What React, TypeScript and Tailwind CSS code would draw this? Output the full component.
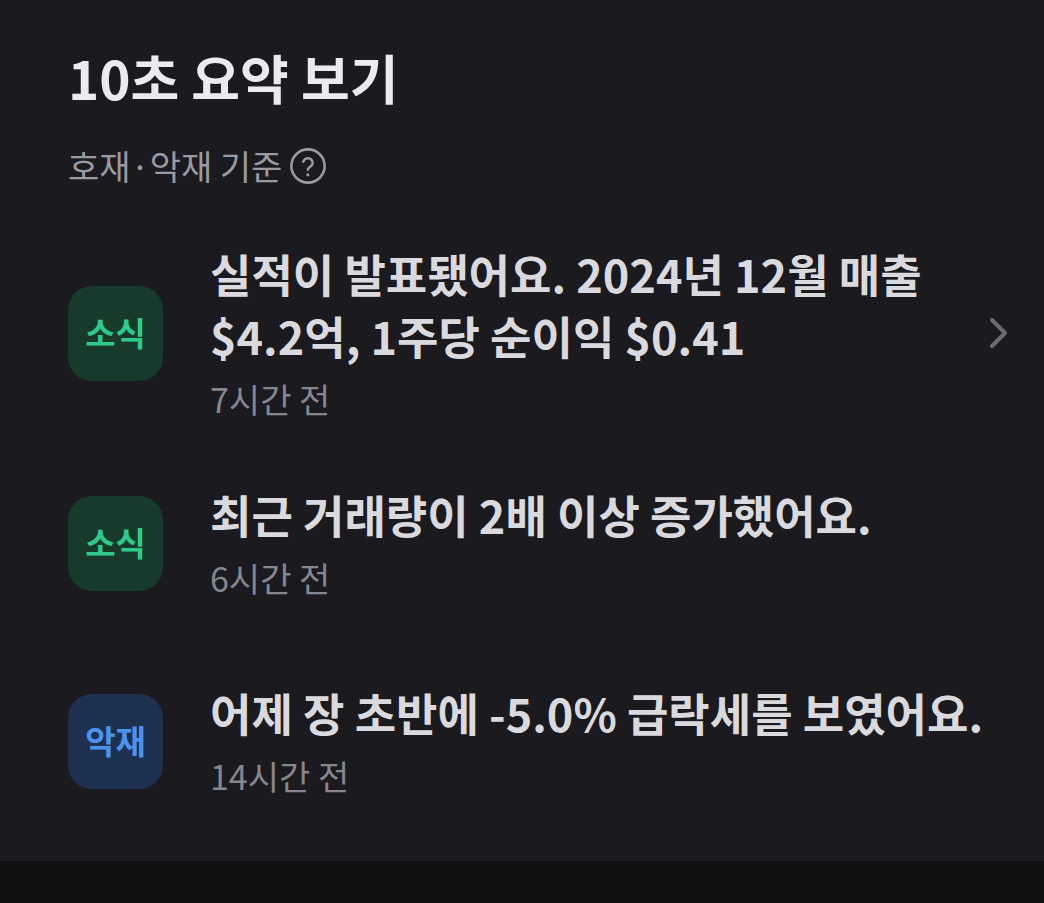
import React from 'react';

type Item = {
  tag: string;
  tone: 'good' | 'bad';
  title: string[];
  time: string;
  space: string;
  link?: boolean;
};

const items: Item[] = [
  {
    tag: '소식',
    tone: 'good',
    title: ['실적이 발표됐어요. 2024년 12월 매출', '$4.2억, 1주당 순이익 $0.41'],
    time: '7시간 전',
    space: 'mt-0',
    link: true,
  },
  { tag: '소식', tone: 'good', title: ['최근 거래량이 2배 이상 증가했어요.'], time: '6시간 전', space: 'mt-[61px]' },
  { tag: '악재', tone: 'bad', title: ['어제 장 초반에 -5.0% 급락세를 보였어요.'], time: '14시간 전', space: 'mt-[80px]' },
];

function Badge({ tag, tone }: { tag: string; tone: Item['tone'] }) {
  const cls =
    tone === 'good' ? 'bg-[#173a2d] text-[#2fc98b]' : 'bg-[#1f3150] text-[#4b93ec]';
  return (
    <div
      className={`w-[95px] h-[95px] shrink-0 rounded-[24px] flex items-center justify-center text-[33px] font-semibold ${cls}`}
    >
      {tag}
    </div>
  );
}

export default function App() {
  return (
    <div
      className="w-[1044px] h-[903px] bg-[#1a1a1f] flex flex-col"
      style={{ fontFamily: '"Noto Sans CJK KR", "Noto Sans", sans-serif' }}
    >
      <div className="flex-1 pl-[68px] pr-[30px] pt-[41px]">
        <h1 className="text-[53px] leading-[72px] font-bold text-[#ebebef]">10초 요약 보기</h1>
        <div className="mt-[31px] flex items-center gap-[7px] text-[34px] leading-[44px] text-[#9a9aa1]">
          <span>호재·악재 기준</span>
          <svg width="38" height="38" viewBox="0 0 24 24" fill="none" stroke="#9a9aa1" strokeWidth="1.6">
            <circle cx="12" cy="12" r="10.5" />
            <path d="M9 9.3a3 3 0 0 1 5.9 0.9c0 2-3 2.4-3 4.1" strokeLinecap="round" />
            <circle cx="11.9" cy="17.6" r="1" fill="#9a9aa1" stroke="none" />
          </svg>
        </div>

        <div className="mt-[55px] flex flex-col">
          {items.map((item, i) => (
            <div key={i} className={`flex items-center gap-[47px] ${item.space}`}>
              <Badge tag={item.tag} tone={item.tone} />
              <div className="flex-1">
                {item.title.map((line, j) => (
                  <div
                    key={j}
                    className="text-[45px] leading-[62px] font-semibold text-[#d9d9de] whitespace-nowrap"
                  >
                    {line}
                  </div>
                ))}
                <div className="mt-[8px] text-[34px] leading-[48px] text-[#86868e]">{item.time}</div>
              </div>
              {item.link && (
                <svg width="24" height="34" viewBox="0 0 24 34" fill="none" className="shrink-0 mr-[3px]">
                  <path d="M5 4l13 13L5 30" stroke="#6b6b73" strokeWidth="4" strokeLinecap="round" strokeLinejoin="round" />
                </svg>
              )}
            </div>
          ))}
        </div>
      </div>
      <div className="h-[42px] bg-[#111113]" />
    </div>
  );
}
